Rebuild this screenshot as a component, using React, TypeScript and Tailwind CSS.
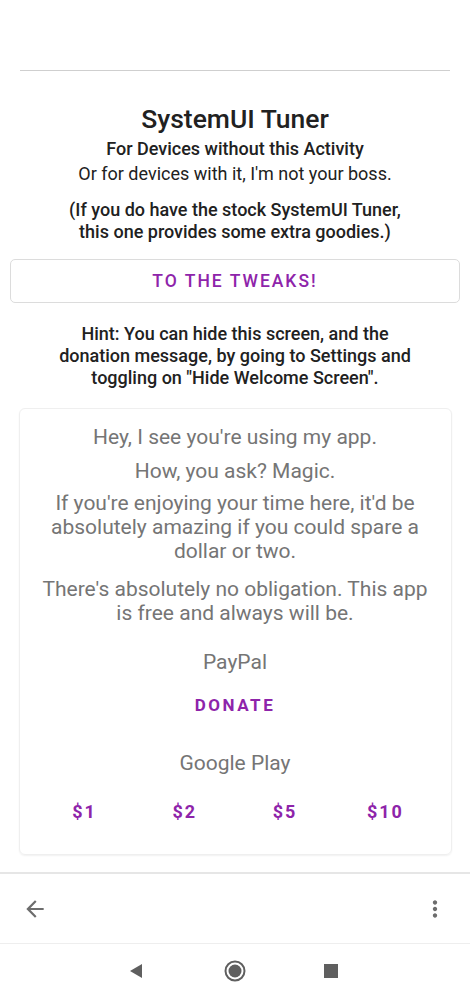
import React from "react";

const purple = "text-[#8e24aa]";

export default function App() {
  return (
    <div
      className="w-[470px] h-[1000px] bg-white flex flex-col overflow-hidden"
      style={{ fontFamily: "Roboto, 'Noto Sans', sans-serif" }}
    >
      <div className="h-[70px] shrink-0" />
      <div className="mx-[20px] border-t border-[#cfcfcf]" />
      <div className="flex-1 flex flex-col items-center">
        <div className="mt-[33px] text-[26.5px] leading-[30px] text-[#212121] font-medium">SystemUI Tuner</div>
        <div className="mt-[3px] text-[18px] leading-[24px] text-[#212121] font-medium">For Devices without this Activity</div>
        <div className="mt-[1px] text-[18px] leading-[24px] text-[#212121]">Or for devices with it, I'm not your boss.</div>
        <div className="mt-[13px] text-[18px] leading-[22px] text-[#212121] font-medium text-center">
          (If you do have the stock SystemUI Tuner,
          <br />
          this one provides some extra goodies.)
        </div>
        <div className="mt-[16px] w-[450px] h-[44px] border border-[#dcdcdc] rounded-[5px] flex items-center justify-center">
          <span className={`${purple} text-[17.5px] font-medium tracking-[2px]`}>TO THE TWEAKS!</span>
        </div>
        <div className="mt-[20px] text-[18px] leading-[22px] text-[#212121] font-medium text-center">
          Hint: You can hide this screen, and the
          <br />
          donation message, by going to Settings and
          <br />
          toggling on "Hide Welcome Screen".
        </div>
        <div className="mt-[19px] w-[433px] h-[447px] border border-[#efefef] rounded-[6px] shadow-[0_1px_2px_rgba(0,0,0,0.06)] flex flex-col items-center px-[15px] text-[#757575] text-[21px] text-center">
          <div className="mt-[16px] leading-[24px]">Hey, I see you're using my app.</div>
          <div className="mt-[10px] leading-[24px]">How, you ask? Magic.</div>
          <div className="mt-[8px] leading-[24px]">
            If you're enjoying your time here, it'd be
            <br />
            absolutely amazing if you could spare a
            <br />
            dollar or two.
          </div>
          <div className="mt-[14px] leading-[24px]">
            There's absolutely no obligation. This app
            <br />
            is free and always will be.
          </div>
          <div className="mt-[25px] leading-[24px]">PayPal</div>
          <div className={`mt-[19px] ${purple} text-[17px] font-bold tracking-[2.5px] leading-[24px]`}>DONATE</div>
          <div className="mt-[34px] leading-[24px]">Google Play</div>
          <div className="mt-[25px] w-full grid grid-cols-4">
            {["$1", "$2", "$5", "$10"].map((v) => (
              <div key={v} className={`${purple} text-[18px] font-bold tracking-[2px] leading-[24px]`}>
                {v}
              </div>
            ))}
          </div>
        </div>
      </div>
      <div className="h-[2px] bg-[#e6e6e6] shrink-0" />
      <div className="h-[70px] shrink-0 flex items-center justify-between px-[22px] border-b border-[#eeeeee]">
        <svg width="26" height="26" viewBox="0 0 24 24" fill="#6d6d6d">
          <path d="M20 11H7.83l5.59-5.59L12 4l-8 8 8 8 1.41-1.41L7.83 13H20v-2z" />
        </svg>
        <svg width="26" height="26" viewBox="0 0 24 24" fill="#6d6d6d">
          <path d="M12 8c1.1 0 2-.9 2-2s-.9-2-2-2-2 .9-2 2 .9 2 2 2zm0 2c-1.1 0-2 .9-2 2s.9 2 2 2 2-.9 2-2-.9-2-2-2zm0 6c-1.1 0-2 .9-2 2s.9 2 2 2 2-.9 2-2-.9-2-2-2z" />
        </svg>
      </div>
      <div className="h-[56px] shrink-0 flex items-center justify-center gap-[77px] pb-[2px] pr-[4px]">
        <svg width="20" height="20" viewBox="0 0 20 20">
          <path d="M15 3 L15 17 L3 10 Z" fill="#5f5f5f" />
        </svg>
        <svg width="22" height="22" viewBox="0 0 22 22">
          <circle cx="11" cy="11" r="9.5" fill="none" stroke="#5f5f5f" strokeWidth="2" />
          <circle cx="11" cy="11" r="6.5" fill="#5f5f5f" />
        </svg>
        <svg width="16" height="16" viewBox="0 0 16 16">
          <rect x="1" y="1" width="14" height="14" fill="#5f5f5f" />
        </svg>
      </div>
    </div>
  );
}
